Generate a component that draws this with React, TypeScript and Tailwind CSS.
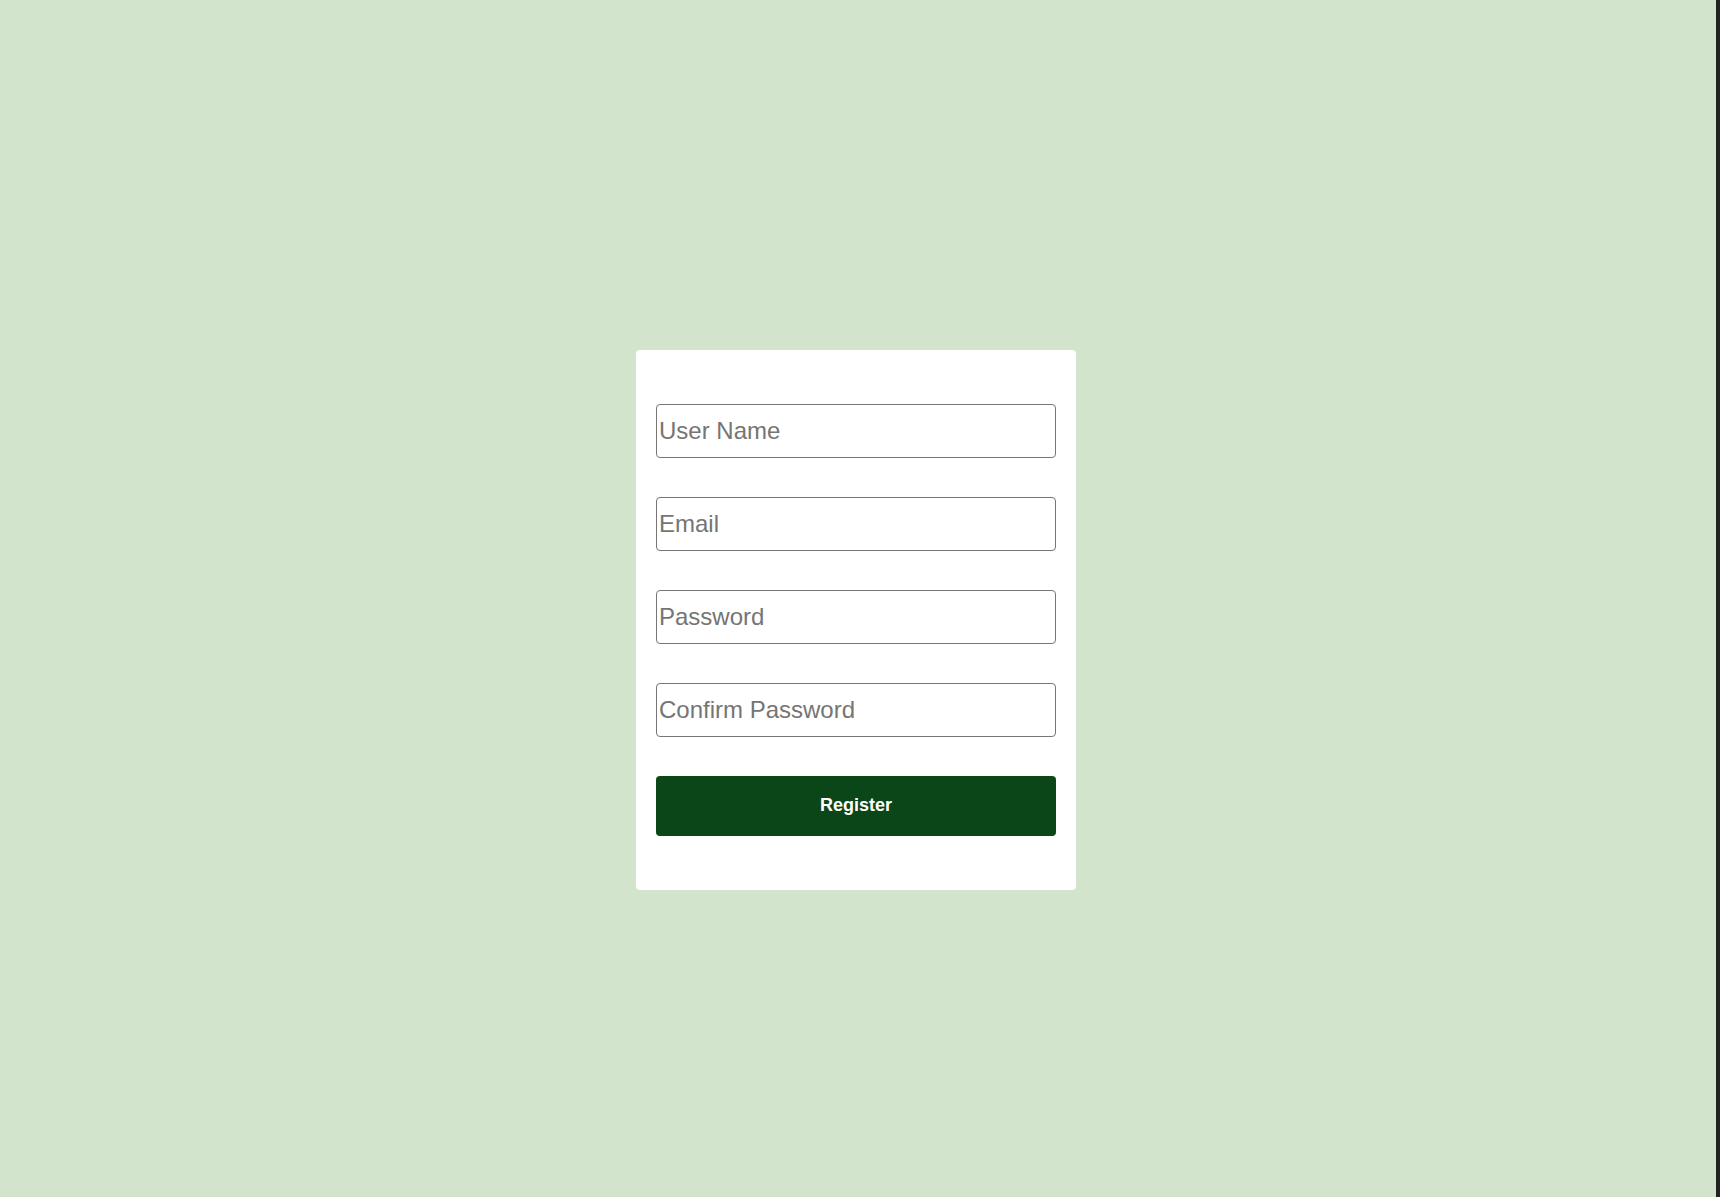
import React from 'react';

const fields = ['User Name', 'Email', 'Password', 'Confirm Password'];

export default function App() {
    return (
        <div className="flex h-[1197px] w-full overflow-hidden" style={{ fontFamily: '"Liberation Sans", Arial, sans-serif' }}>
            <div className="flex flex-1 justify-center bg-[#d3e4cd] pr-1 pt-[350px]">
                <form className="flex h-[540px] w-[440px] flex-col rounded bg-white px-5 pt-[54px]">
                    {fields.map((name) => (
                        <input
                            key={name}
                            type={name.includes('Password') ? 'password' : 'text'}
                            placeholder={name}
                            className="mb-[39px] h-[54px] w-full rounded border border-[#767676] px-[2px] text-[24px] text-black placeholder:text-[#757575] outline-none"
                        />
                    ))}
                    <button
                        type="button"
                        className="h-[60px] w-full rounded bg-[#0b4619] pb-[2px] text-[18px] font-bold text-white"
                    >
                        Register
                    </button>
                </form>
            </div>
            <div className="w-1 bg-[#222222]" />
        </div>
    );
}
